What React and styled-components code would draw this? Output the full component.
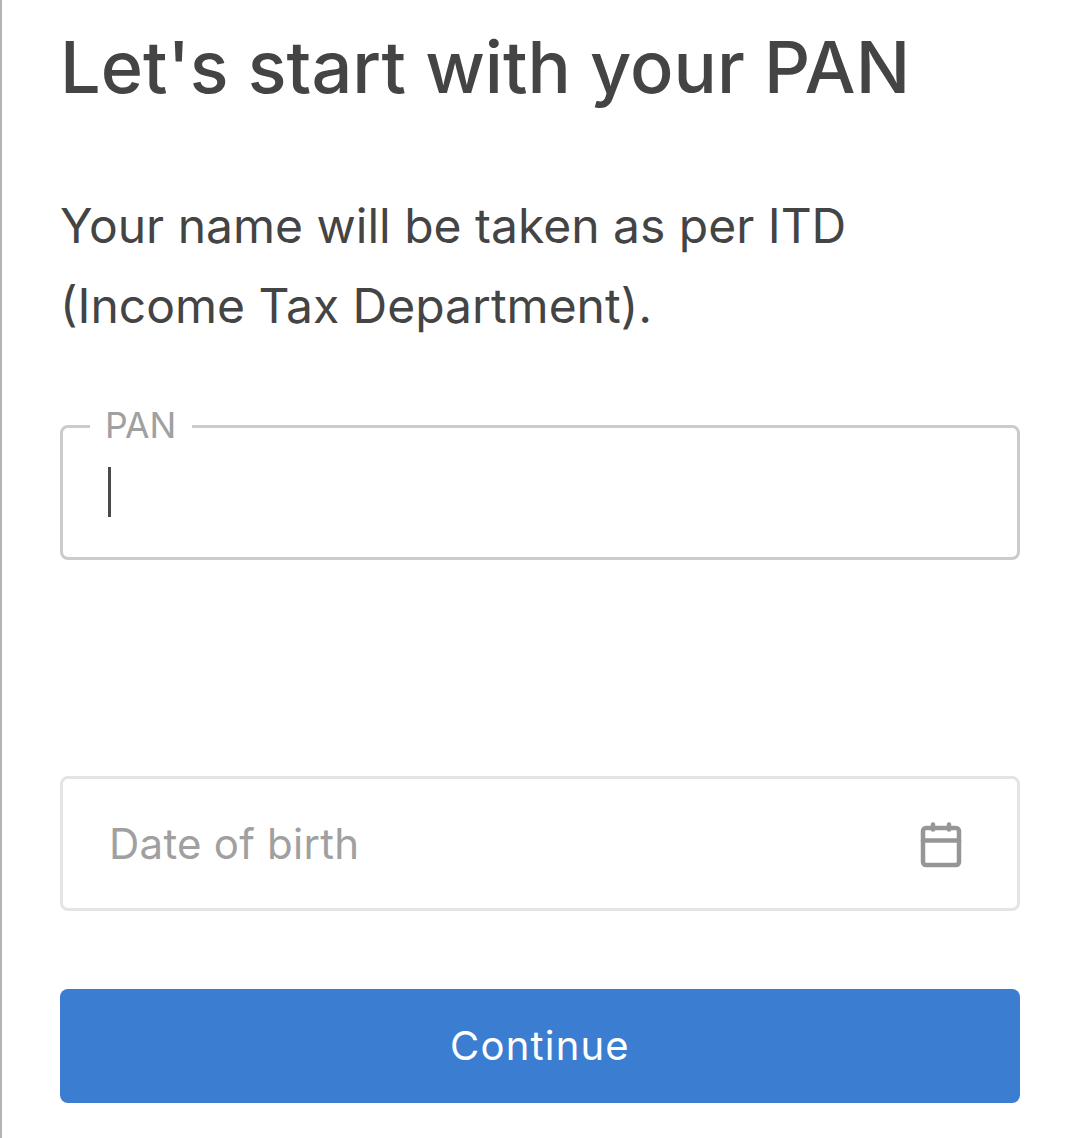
import React from 'react';
import styled, { createGlobalStyle } from 'styled-components';

const Global = createGlobalStyle`
  html, body {
    margin: 0;
    padding: 0;
    background: #fff;
  }
  * { box-sizing: border-box; }
`;

const Page = styled.div`
  width: 1080px;
  height: 1138px;
  padding: 24px 60px 0 60px;
  border-left: 2px solid #b4b4b4;
  font-family: Inter, "Liberation Sans", sans-serif;
  overflow: hidden;
`;

const Content = styled.div`
  width: 960px;
  margin-left: -2px;
  display: flex;
  flex-direction: column;
`;

const Title = styled.h1`
  margin: 0 0 76px 0;
  font-size: 72px;
  line-height: 86px;
  font-weight: 500;
  color: #444;
`;

const Intro = styled.p`
  margin: 0 0 79px 0;
  font-size: 48px;
  line-height: 80px;
  font-weight: 400;
  color: #444;
`;

const Field = styled.div`
  position: relative;
  height: 135px;
  padding: 0 46px;
  display: flex;
  align-items: center;
  justify-content: space-between;
  border: 3px solid ${(p) => (p.$active ? '#cbcbcb' : '#e4e4e4')};
  border-radius: 8px;
  margin-bottom: ${(p) => p.$gap || 0}px;
`;

const FloatLabel = styled.span`
  position: absolute;
  top: -22px;
  left: 27px;
  padding: 0 16px 0 15px;
  background: #fff;
  font-size: 35.5px;
  line-height: 40px;
  color: #a0a0a0;
`;

const Caret = styled.span`
  position: absolute;
  left: 45px;
  top: 39px;
  width: 3px;
  height: 50px;
  background: #4a4a4a;
`;

const Placeholder = styled.span`
  font-size: 42px;
  line-height: 48px;
  letter-spacing: 0.25px;
  color: #a0a0a0;
`;

const CalendarIcon = styled.svg`
  width: 44px;
  height: 48px;
  margin-right: 8px;
  margin-top: 2px;
  color: #969696;
`;

const Button = styled.button`
  height: 114px;
  padding-bottom: 2px;
  border: 0;
  border-radius: 8px;
  background: #3b7ed1;
  color: #fff;
  font-family: inherit;
  font-size: 40px;
  letter-spacing: 1.2px;
  font-weight: 400;
`;

function Calendar() {
  return (
    <CalendarIcon viewBox="0 0 44 48" fill="none" stroke="currentColor" strokeWidth="4.5" strokeLinecap="round">
      <rect x="4" y="7" width="36" height="37" rx="3" />
      <path d="M4 19.5h36" />
      <path d="M14 3.5v5M30 3.5v5" />
    </CalendarIcon>
  );
}

export default function App() {
  return (
    <>
      <Global />
      <Page>
        <Content>
          <Title>Let's start with your PAN</Title>
          <Intro>
            Your name will be taken as per ITD
            <br />
            (Income Tax Department).
          </Intro>
          <Field $active $gap={216}>
            <FloatLabel>PAN</FloatLabel>
            <Caret />
          </Field>
          <Field $gap={78}>
            <Placeholder>Date of birth</Placeholder>
            <Calendar />
          </Field>
          <Button>Continue</Button>
        </Content>
      </Page>
    </>
  );
}
